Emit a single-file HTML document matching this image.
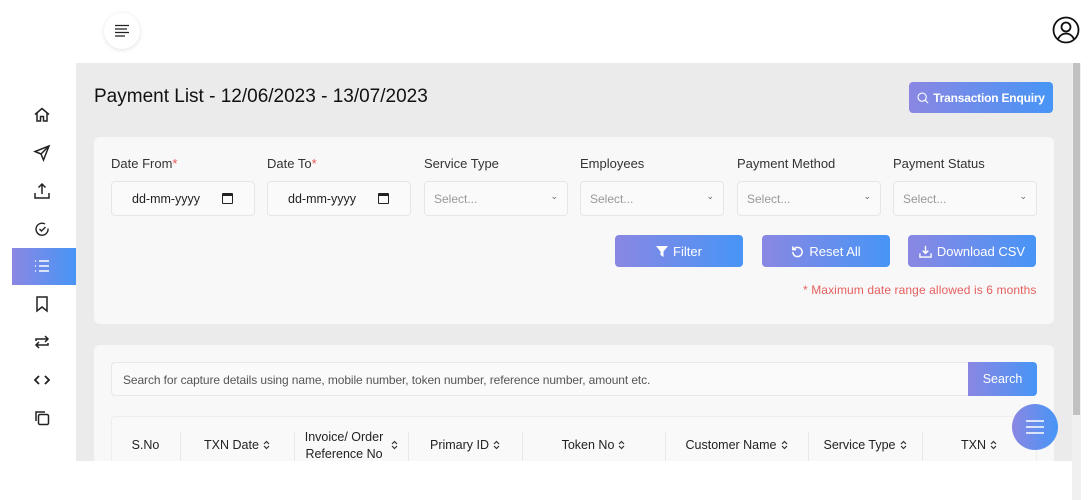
<!DOCTYPE html>
<html><head><style>
*{box-sizing:border-box;margin:0;padding:0}
body{width:1092px;height:500px;overflow:hidden;background:#fff;font-family:"Liberation Sans",sans-serif;position:relative;color:#222}
.abs{position:absolute}
.g{background:linear-gradient(90deg,#8a87e3,#4795f6);color:#fff}
.main{left:76px;top:63px;width:996px;height:398px;background:#ebebeb}
.card{background:#f8f8f8;border-radius:6px}
.lbl{font-size:13px;color:#333;top:156px}
.inp{top:181px;width:144px;height:35px;border:1px solid #e6e6e6;border-radius:4px;background:#fafafa;font-size:12px;color:#999;padding:10px 9px}
.btn{top:235px;height:32px;border-radius:4px;font-size:13px;display:flex;align-items:center;justify-content:center;gap:5px}
.th{top:437px;font-size:12.5px;color:#222;text-align:center}
.div{top:432px;width:1px;height:30px;background:#e8e8e8}
.ic{left:33px;width:18px;height:18px}
.s{display:inline-block;width:7px;height:10px;margin-left:4px;vertical-align:-1px}
</style></head><body>
<div class="abs" style="left:104px;top:13px;width:36px;height:36px;border-radius:50%;background:#fff;box-shadow:0 1px 5px rgba(0,0,0,.12)"></div>
<svg class="abs" style="left:114px;top:24px" width="16" height="14" viewBox="0 0 16 14" stroke="#222" stroke-width="1.3"><path d="M1 1.5h14M1 5h12M1 8.5h14M1 12h10"/></svg>
<svg class="abs" style="left:1052px;top:16px" width="28" height="28" viewBox="0 0 28 28" fill="none" stroke="#111" stroke-width="1.8"><circle cx="14" cy="14" r="12.5"/><circle cx="14" cy="11" r="4.5"/><path d="M6 23c2-4 5-5.5 8-5.5s6 1.5 8 5.5"/></svg>

<div class="abs g" style="left:12px;top:248px;width:64px;height:37px"></div>
<svg class="abs ic" style="top:106px" viewBox="0 0 18 18" fill="none" stroke="#222" stroke-width="1.5"><path d="M2 8.5L9 2.5l7 6M4 7v8h3.5v-4.5h3V15H14V7"/></svg>
<svg class="abs ic" style="top:144px" viewBox="0 0 18 18" fill="none" stroke="#222" stroke-width="1.5"><path d="M16 2L2 7.5l6 2.5 2.5 6z M8 10l8-8"/></svg>
<svg class="abs ic" style="top:182px" viewBox="0 0 18 18" fill="none" stroke="#222" stroke-width="1.5"><path d="M9 12V2M5.5 5.5L9 2l3.5 3.5M2 11v5h14v-5"/></svg>
<svg class="abs ic" style="top:220px" viewBox="0 0 18 18" fill="none" stroke="#222" stroke-width="1.4"><path d="M15 8.5A6 6 0 1 1 12 4M6.5 9l2 2 4-4"/></svg>
<svg class="abs ic" style="top:257px" viewBox="0 0 18 18" fill="none" stroke="#fff" stroke-width="1.6"><path d="M2 4h1M2 9h1M2 14h1M6 4h10M6 9h10M6 14h10"/></svg>
<svg class="abs ic" style="top:295px" viewBox="0 0 18 18" fill="none" stroke="#222" stroke-width="1.5"><path d="M4 2h10v14l-5-4-5 4z"/></svg>
<svg class="abs ic" style="top:333px" viewBox="0 0 18 18" fill="none" stroke="#222" stroke-width="1.5"><path d="M3 8V6h12M12 3l3 3-3 3M15 10v2H3M6 15l-3-3 3-3"/></svg>
<svg class="abs ic" style="top:371px" viewBox="0 0 18 18" fill="none" stroke="#222" stroke-width="1.8"><path d="M6 5L2 9l4 4M12 5l4 4-4 4"/></svg>
<svg class="abs ic" style="top:409px" viewBox="0 0 18 18" fill="none" stroke="#222" stroke-width="1.5"><rect x="5.5" y="5.5" width="10" height="10" rx="1.5"/><path d="M3 12V3h9"/></svg>

<div class="abs main"></div>
<div class="abs" style="left:1072px;top:63px;width:9px;height:398px;background:#f0f0f0"></div>
<div class="abs" style="left:1073px;top:63px;width:7px;height:352px;background:#c1c1c1"></div>
<div class="abs" style="left:94px;top:86px;font-size:19px;color:#111">Payment List - 12/06/2023 - 13/07/2023</div>
<div class="abs g" style="left:909px;top:82px;width:144px;height:31px;border-radius:4px;font-size:12px;font-weight:bold;display:flex;align-items:center;justify-content:center;gap:4px;letter-spacing:-0.2px"><svg width="12" height="12" viewBox="0 0 14 14" fill="none" stroke="#fff" stroke-width="1.3"><circle cx="6" cy="6" r="4.8"/><path d="M9.5 9.5L13 13"/></svg>Transaction Enquiry</div>

<div class="abs card" style="left:94px;top:137px;width:960px;height:187px"></div>
<div class="abs lbl" style="left:111px">Date From<span style="color:#e55">*</span></div>
<div class="abs lbl" style="left:267px">Date To<span style="color:#e55">*</span></div>
<div class="abs lbl" style="left:424px">Service Type</div>
<div class="abs lbl" style="left:580px">Employees</div>
<div class="abs lbl" style="left:737px">Payment Method</div>
<div class="abs lbl" style="left:893px">Payment Status</div>
<div class="abs inp" style="left:111px;color:#222;font-size:12.5px;padding-left:20px">dd-mm-yyyy<span style="position:absolute;left:110px;top:11px;width:11px;height:11px;border:1.5px solid #222;border-top-width:3px;border-radius:1px"></span></div>
<div class="abs inp" style="left:267px;color:#222;font-size:12.5px;padding-left:20px">dd-mm-yyyy<span style="position:absolute;left:110px;top:11px;width:11px;height:11px;border:1.5px solid #222;border-top-width:3px;border-radius:1px"></span></div>
<div class="abs inp" style="left:424px">Select...<span style="position:absolute;right:9px;top:9px;font-size:9px;color:#666">&#8964;</span></div>
<div class="abs inp" style="left:580px">Select...<span style="position:absolute;right:9px;top:9px;font-size:9px;color:#666">&#8964;</span></div>
<div class="abs inp" style="left:737px">Select...<span style="position:absolute;right:9px;top:9px;font-size:9px;color:#666">&#8964;</span></div>
<div class="abs inp" style="left:893px">Select...<span style="position:absolute;right:9px;top:9px;font-size:9px;color:#666">&#8964;</span></div>
<div class="abs btn g" style="left:615px;width:128px"><svg width="12" height="12" viewBox="0 0 12 12" fill="#fff"><path d="M0 1h12L7.5 6.5V12l-3-2V6.5z"/></svg>Filter</div>
<div class="abs btn g" style="left:762px;width:128px"><svg width="13" height="13" viewBox="0 0 14 14" fill="none" stroke="#fff" stroke-width="1.6"><path d="M3 4.5A5 5 0 1 1 2 7.5M2 1.5v3.5h3.5"/></svg>Reset All</div>
<div class="abs btn g" style="left:908px;width:128px"><svg width="13" height="13" viewBox="0 0 14 14" fill="none" stroke="#fff" stroke-width="1.5"><path d="M7 1v8M4 6l3 3 3-3M1 9v4h12V9"/></svg>Download CSV</div>
<div class="abs" style="left:803px;top:283px;font-size:12px;color:#e56060;letter-spacing:0.1px">* Maximum date range allowed is 6 months</div>

<div class="abs card" style="left:94px;top:345px;width:960px;height:120px"></div>
<div class="abs" style="left:111px;top:362px;width:858px;height:34px;border:1px solid #e8e8e8;border-right:none;border-radius:4px 0 0 4px;background:#fafafa;font-size:12px;color:#555;padding:10px 11px;letter-spacing:-0.1px">Search for capture details using name, mobile number, token number, reference number, amount etc.</div>
<div class="abs g" style="left:968px;top:362px;width:69px;height:34px;border-radius:0 4px 4px 0;font-size:12.5px;display:flex;align-items:center;justify-content:center">Search</div>
<div class="abs" style="left:111px;top:416px;width:926px;height:50px;border:1px solid #eee;border-radius:4px;background:#f9f9f9"></div>
<svg width="0" height="0" style="position:absolute"><defs><symbol id="srt" viewBox="0 0 7 10"><path d="M1 4L3.5 1.5 6 4M1 6l2.5 2.5L6 6" fill="none" stroke="#333" stroke-width="1.2"/></symbol></defs></svg>
<div class="abs th" style="left:111px;width:69px;top:438px">S.No</div>
<div class="abs div" style="left:180px"></div>
<div class="abs th" style="left:180px;width:114px;top:438px">TXN Date<svg class="s"><use href="#srt"/></svg></div>
<div class="abs div" style="left:294px"></div>
<div class="abs th" style="left:294px;width:100px;top:429px;line-height:17px">Invoice/ Order<br>Reference No</div>
<svg class="abs s" style="left:387px;top:440px"><use href="#srt"/></svg>
<div class="abs div" style="left:408px"></div>
<div class="abs th" style="left:408px;width:114px;top:438px">Primary ID<svg class="s"><use href="#srt"/></svg></div>
<div class="abs div" style="left:522px"></div>
<div class="abs th" style="left:522px;width:143px;top:438px">Token No<svg class="s"><use href="#srt"/></svg></div>
<div class="abs div" style="left:665px"></div>
<div class="abs th" style="left:665px;width:143px;top:438px">Customer Name<svg class="s"><use href="#srt"/></svg></div>
<div class="abs div" style="left:808px"></div>
<div class="abs th" style="left:808px;width:114px;top:438px">Service Type<svg class="s"><use href="#srt"/></svg></div>
<div class="abs div" style="left:922px"></div>
<div class="abs th" style="left:922px;width:114px;top:438px">TXN<svg class="s"><use href="#srt"/></svg></div>
<div class="abs" style="left:0;top:461px;width:1092px;height:39px;background:#fff"></div>
<div class="abs" style="left:1072px;top:461px;width:9px;height:39px;background:#f0f0f0"></div>
<div class="abs g" style="left:1012px;top:404px;width:46px;height:46px;border-radius:50%"></div>
<svg class="abs" style="left:1025px;top:419px" width="20" height="16" viewBox="0 0 20 16" stroke="#fff" stroke-width="1.6"><path d="M1 2h18M1 8h18M1 14h18"/></svg>
</body></html>
